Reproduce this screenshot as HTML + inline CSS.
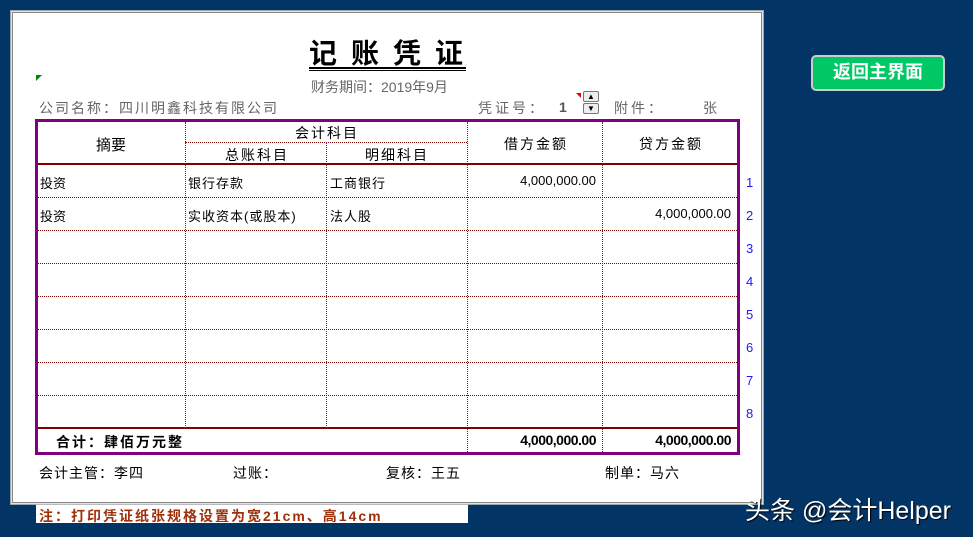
<!DOCTYPE html>
<html><head><meta charset="utf-8"><style>
*{margin:0;padding:0;box-sizing:border-box}
body{width:973px;height:537px;background:#033466;position:relative;overflow:hidden;font-family:"Liberation Sans","Noto Sans CJK SC",sans-serif}
.a{position:absolute;white-space:nowrap}
.hl{position:absolute;left:38px;width:699px;border-top:1px dotted #800000;height:0}
.vl{position:absolute;width:0;border-left:1px dotted #8b008b}
.t{font-size:12px;color:#000}
.r{position:absolute;font-size:13px;color:#000;text-align:right;width:130px}
.n{position:absolute;left:746px;font-size:13px;color:#1a1aff}
</style></head><body>
<div class="a" style="left:10px;top:10px;width:754px;height:495px;border:1px solid #9aa;background:#dfe3e6"></div>
<div class="a" style="left:12px;top:12px;width:750px;height:491px;background:#fff;border:1px solid #888"></div>

<div class="a" style="left:309px;top:38px;font-size:28px;font-weight:bold;letter-spacing:14px;color:#000;line-height:32px">记账凭证</div>
<div class="a" style="left:309px;top:67px;width:157px;border-top:2px solid #000;height:4px;border-bottom:1px solid #000"></div>
<div class="a" style="left:36px;top:75px;width:0;height:0;border-top:6px solid #080;border-right:6px solid transparent"></div>
<div class="a" style="left:311px;top:77px;font-size:14px;color:#666">财务期间：2019年9月</div>
<div class="a" style="left:39px;top:98px;font-size:14px;color:#666;letter-spacing:2px">公司名称：四川明鑫科技有限公司</div>
<div class="a" style="left:478px;top:98px;font-size:14px;color:#666;letter-spacing:3px">凭证号：</div>
<div class="a" style="left:559px;top:99px;font-size:14px;color:#555;font-weight:bold">1</div>
<div class="a" style="left:576px;top:93px;width:0;height:0;border-top:5px solid #e00;border-left:5px solid transparent"></div>
<div class="a" style="left:583px;top:91px;width:16px;height:11px;border:1px solid #777;border-radius:2px;background:#eee;font-size:8px;text-align:center;line-height:9px">▲</div>
<div class="a" style="left:583px;top:103px;width:16px;height:11px;border:1px solid #777;border-radius:2px;background:#eee;font-size:8px;text-align:center;line-height:9px">▼</div>
<div class="a" style="left:614px;top:98px;font-size:14px;color:#666;letter-spacing:3px">附件：</div>
<div class="a" style="left:703px;top:98px;font-size:14px;color:#666">张</div>

<div class="a" style="left:35px;top:119px;width:705px;height:336px;border:2px solid #800080"></div>
<div class="a" style="left:37px;top:121px;width:701px;height:332px;border:1px solid #800080"></div>

<div class="a" style="left:38px;top:163px;width:699px;height:2px;background:#800000"></div>
<div class="a" style="left:185px;top:142px;width:282px;border-top:1px dotted #800000"></div>
<div class="vl" style="left:185px;top:122px;height:306px"></div>
<div class="vl" style="left:326px;top:142px;height:286px"></div>
<div class="vl" style="left:467px;top:122px;height:330px"></div>
<div class="vl" style="left:602px;top:122px;height:330px"></div>
<div class="a" style="left:96px;top:134px;font-size:15px">摘要</div>
<div class="a" style="left:295px;top:123px;font-size:14px;letter-spacing:2px">会计科目</div>
<div class="a" style="left:225px;top:145px;font-size:14px;letter-spacing:2px">总账科目</div>
<div class="a" style="left:365px;top:145px;font-size:14px;letter-spacing:2px">明细科目</div>
<div class="a" style="left:504px;top:134px;font-size:14px;letter-spacing:2px">借方金额</div>
<div class="a" style="left:639px;top:134px;font-size:14px;letter-spacing:2px">贷方金额</div>

<div class="hl" style="top:197px"></div>
<div class="hl" style="top:230px"></div>
<div class="hl" style="top:263px"></div>
<div class="hl" style="top:296px"></div>
<div class="hl" style="top:329px"></div>
<div class="hl" style="top:362px"></div>
<div class="hl" style="top:395px"></div>
<div class="a" style="left:38px;top:427px;width:699px;height:2px;background:#800000"></div>

<div class="a t" style="left:40px;top:173px;font-size:13px">投资</div>
<div class="a t" style="left:188px;top:173px;font-size:13px;letter-spacing:1px">银行存款</div>
<div class="a t" style="left:330px;top:173px;font-size:13px;letter-spacing:1px">工商银行</div>
<div class="r" style="left:466px;top:173px">4,000,000.00</div>
<div class="a t" style="left:40px;top:206px;font-size:13px">投资</div>
<div class="a t" style="left:188px;top:206px;font-size:13px;letter-spacing:1px">实收资本(或股本)</div>
<div class="a t" style="left:330px;top:206px;font-size:13px;letter-spacing:1px">法人股</div>
<div class="r" style="left:601px;top:206px">4,000,000.00</div>

<div class="n" style="top:175px">1</div><div class="n" style="top:208px">2</div><div class="n" style="top:241px">3</div><div class="n" style="top:274px">4</div><div class="n" style="top:307px">5</div><div class="n" style="top:340px">6</div><div class="n" style="top:373px">7</div><div class="n" style="top:406px">8</div>

<div class="a" style="left:56px;top:432px;font-size:14px;font-weight:bold;letter-spacing:2px">合计：肆佰万元整</div>
<div class="r" style="left:466px;top:432px;font-size:14px;font-weight:bold;letter-spacing:-0.5px">4,000,000.00</div>
<div class="r" style="left:601px;top:432px;font-size:14px;font-weight:bold;letter-spacing:-0.5px">4,000,000.00</div>

<div class="a" style="left:39px;top:463px;font-size:14px;letter-spacing:1px">会计主管：李四</div>
<div class="a" style="left:233px;top:463px;font-size:14px;letter-spacing:1px">过账：</div>
<div class="a" style="left:386px;top:463px;font-size:14px;letter-spacing:1px">复核：王五</div>
<div class="a" style="left:605px;top:463px;font-size:14px;letter-spacing:1px">制单：马六</div>

<div class="a" style="left:36px;top:504px;width:432px;height:19px;background:#fff;border-top:1px solid #bbb"></div>
<div class="a" style="left:39px;top:506px;font-size:14px;font-weight:bold;color:#a0300a;letter-spacing:2px">注：打印凭证纸张规格设置为宽21cm、高14cm</div>

<div class="a" style="left:811px;top:55px;width:134px;height:36px;background:#00c864;border:2px solid #ccc;border-radius:5px;color:#fff;font-size:18px;font-weight:bold;text-align:center;line-height:31px">返回主界面</div>

<div class="a" style="left:745px;top:491px;font-size:25px;color:#fff;text-shadow:1px 1px 1px #000">头条 @会计Helper</div>
</body></html>
